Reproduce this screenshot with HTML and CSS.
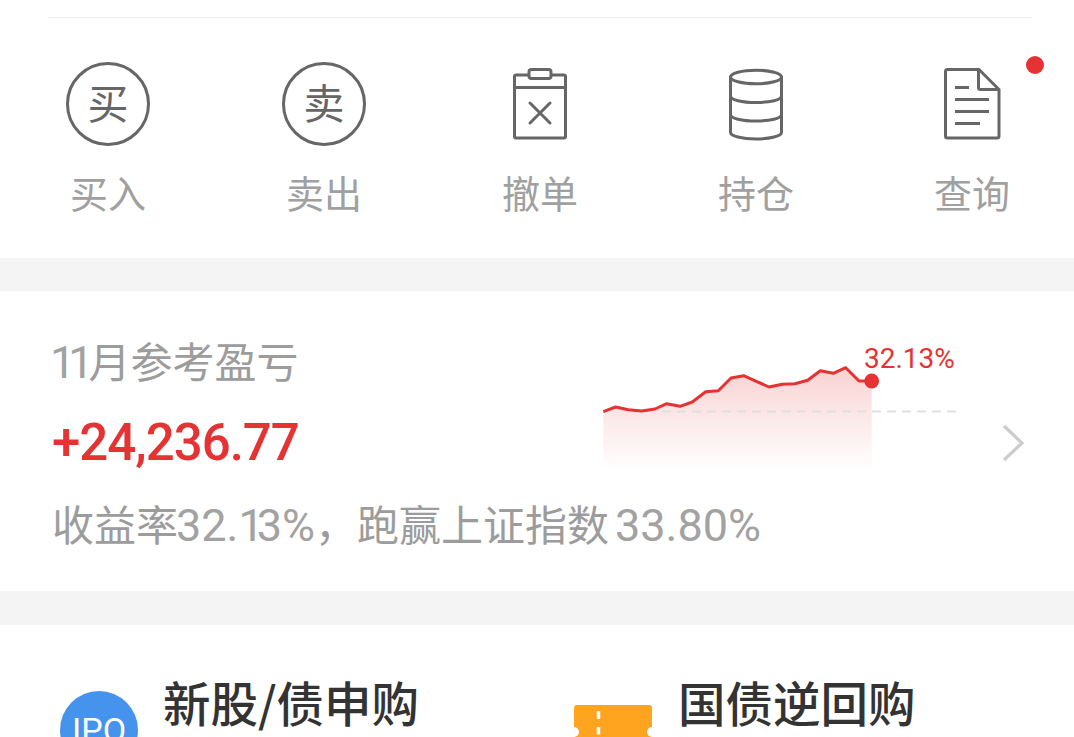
FILE: index.html
```html
<!DOCTYPE html>
<html lang="zh-CN">
<head>
<meta charset="utf-8">
<title>交易</title>
<link rel="stylesheet" href="styles.css">
</head>
<body>
<div class="page">
  <section class="trade">
    <div class="rule"></div>
    <div class="actions">
      <div class="action">
        <div class="icon"><div class="coin">买</div></div>
        <div class="label">买入</div>
      </div>
      <div class="action">
        <div class="icon"><div class="coin">卖</div></div>
        <div class="label">卖出</div>
      </div>
      <div class="action">
        <div class="icon">
          <svg class="glyph" width="84" height="84" viewBox="0 0 84 84" fill="none" stroke="#666" stroke-width="3" stroke-linejoin="round" stroke-linecap="round">
            <rect x="16.500" y="13" width="51" height="63" rx="1.500"/>
            <rect x="31" y="7.500" width="22" height="9" rx="2.500" fill="#fff"/>
            <path d="M16.500 25.500h51M32 41l20 20M52 41l-20 20"/>
          </svg>
        </div>
        <div class="label">撤单</div>
      </div>
      <div class="action">
        <div class="icon">
          <svg class="glyph" width="84" height="84" viewBox="0 0 84 84" fill="none" stroke="#666" stroke-width="3" stroke-linecap="round" stroke-linejoin="round">
            <ellipse cx="42" cy="15" rx="25.500" ry="6.800"/>
            <path d="M16.500 15v55.500c0 3.500 11.400 6.500 25.500 6.500s25.500-3 25.500-6.500V15M16.500 34c0 3.800 11.400 6.500 25.500 6.500S67.500 37.800 67.500 34M16.500 52.500c0 3.800 11.400 6.500 25.500 6.500s25.500-2.700 25.500-6.500"/>
          </svg>
        </div>
        <div class="label">持仓</div>
      </div>
      <div class="action">
        <div class="icon">
          <svg class="glyph" width="84" height="84" viewBox="0 0 84 84" fill="none" stroke="#666" stroke-width="3" stroke-linejoin="round">
            <path d="M17.500 7.500h31.500l20 20v46.500a2 2 0 0 1-2 2h-49.500a2 2 0 0 1-2-2v-64.500a2 2 0 0 1 2-2z"/>
            <path d="M48.500 7.500v18a2 2 0 0 0 2 2h18.500M25 25.500h14M25 37.500h34M25 49.500h34M25 61.500h25"/>
          </svg>
        </div>
        <div class="label">查询</div>
        <span class="dot"></span>
      </div>
    </div>
  </section>

  <section class="profit">
    <div class="profit-main">
      <div class="profit-title"><span class="num month"><span class="one">11</span></span>月参考盈亏</div>
      <div class="profit-value">+24,236.77</div>
      <div class="profit-note">收益率<span class="num rate">32.<span class="one">1</span>3%</span>，跑赢上证指数<span class="num index">33.80%</span></div>
    </div>
    <svg class="chart" width="380" height="140" viewBox="595 335 380 140">
      <defs>
        <linearGradient id="fade" x1="0" y1="0" x2="0" y2="1">
          <stop offset="0" stop-color="#e53333" stop-opacity=".22"/>
          <stop offset="1" stop-color="#e53333" stop-opacity="0"/>
        </linearGradient>
      </defs>
      <path d="M603.300 411.700L615.700 407 628.300 409.700 641.700 411 655 409 666.700 403.700 680 406.300 692.300 402 705.700 391.700 718.300 390.700 731 378 743.700 375.700 756.300 381.300 769 387 782.300 384.300 795 383.700 807.700 380.300 820.300 370.700 833.300 373.300 845.700 367.700 859 381 871.700 381V470H603.300z" fill="url(#fade)"/>
      <path d="M662 411.500H958" stroke="#e0e0e0" stroke-width="2" stroke-dasharray="9 6" fill="none"/>
      <path d="M603.300 411.700L615.700 407 628.300 409.700 641.700 411 655 409 666.700 403.700 680 406.300 692.300 402 705.700 391.700 718.300 390.700 731 378 743.700 375.700 756.300 381.300 769 387 782.300 384.300 795 383.700 807.700 380.300 820.300 370.700 833.300 373.300 845.700 367.700 859 381 871.700 381" fill="none" stroke="#e53333" stroke-width="3" stroke-linejoin="round"/>
      <circle cx="871.700" cy="381" r="7.400" fill="#e53333"/>
    </svg>
    <div class="chart-label">32.13%</div>
    <svg class="chevron" width="24" height="38" viewBox="0 0 24 38" fill="none" stroke="#cccccc" stroke-width="3.200">
      <path d="M2 2l18 17L2 36"/>
    </svg>
  </section>

  <section class="quick">
    <div class="quick-item">
      <div class="ipo">IPO</div>
      <div class="quick-title">新股/债申购</div>
    </div>
    <div class="quick-item">
      <svg class="ticket" width="78" height="60" viewBox="0 0 78 60">
        <path d="M3 0H75a3 3 0 0 1 3 3V22a5 5 0 0 0 0 10V57a3 3 0 0 1-3 3H3a3 3 0 0 1-3-3V32a5 5 0 0 0 0-10V3a3 3 0 0 1 3-3z" fill="#ffa41f"/>
        <path d="M24.500 6v8M24.500 22v7.500" stroke="#fff" stroke-width="3.500" fill="none"/>
      </svg>
      <div class="quick-title">国债逆回购</div>
    </div>
  </section>
</div>
</body>
</html>
```
FILE: styles.css
```css
* { box-sizing: border-box; }
html, body { margin: 0; padding: 0; }
body {
  width: 1074px;
  height: 737px;
  overflow: hidden;
  background: #f4f4f4;
  font-family: "Noto Sans CJK SC", Roboto, sans-serif;
}
.page { display: flex; flex-direction: column; gap: 33px; }
.trade { height: 258px; background: #fff; padding-top: 17px; }
.rule { height: 1px; margin: 0 42px 0 48px; background: #eeeeee; }
.actions { display: grid; grid-template-columns: repeat(5, 216px); padding-top: 44px; }
.action { position: relative; display: flex; flex-direction: column; align-items: center; }
.icon { width: 84px; height: 84px; display: flex; align-items: center; justify-content: center; }
.coin {
  width: 84px; height: 84px;
  border: 3px solid #666;
  border-radius: 50%;
  color: #666;
  font-size: 41px;
  line-height: 73px;
  text-align: center;
}
.glyph { display: block; }
.label { margin-top: 21px; font-size: 38px; line-height: 50px; color: #a0a0a0; }
.dot { position: absolute; top: -6px; left: 162px; width: 18px; height: 18px; border-radius: 50%; background: #e53333; }

.profit { position: relative; height: 300px; background: #fff; padding: 41px 0 0 52px; }
.profit-title { height: 56px; font-size: 42px; line-height: 56px; color: #9c9c9c; white-space: nowrap; }
.profit-value { margin-top: 25px; font-family: Roboto, sans-serif; font-weight: 500; font-size: 51px; letter-spacing: -1px; line-height: 60px; color: #e53333; }
.profit-note { height: 56px; margin-top: 22px; font-size: 42px; line-height: 56px; color: #9c9c9c; white-space: nowrap; }
.num { font-family: Roboto, sans-serif; font-weight: 400; font-size: 45px; line-height: 1; color: #a2a2a2; }
.one { letter-spacing: -7px; }
.month { margin-left: -2px; margin-right: 2px; }
.rate { margin-left: -2px; }
.index { margin-left: 6px; }
.chart { position: absolute; left: 595px; top: 44px; }
.chart-label { position: absolute; left: 864px; top: 52px; font-family: Roboto, sans-serif; font-size: 28px; line-height: 32px; color: #e53333; }
.chevron { position: absolute; left: 1002px; top: 133px; }

.quick { height: 112px; margin-top: 1px; background: #fff; display: grid; grid-template-columns: 514px 1fr; padding: 0 0 0 60px; overflow: hidden; }
.quick-item { position: relative; }
.quick-title { position: absolute; top: 45px; font-size: 47.500px; line-height: 64px; font-weight: 500; color: #333; white-space: nowrap; }
.quick-item:first-child .quick-title { left: 103px; }
.quick-item:last-child .quick-title { left: 104px; }
.ipo {
  position: absolute; left: 0; top: 66px;
  width: 78px; height: 78px; border-radius: 50%;
  background: #4593ec; color: #fff;
  font-family: Roboto, sans-serif; font-size: 34px; line-height: 78px; text-align: center;
}
.ticket { position: absolute; left: 0; top: 80px; }
```
